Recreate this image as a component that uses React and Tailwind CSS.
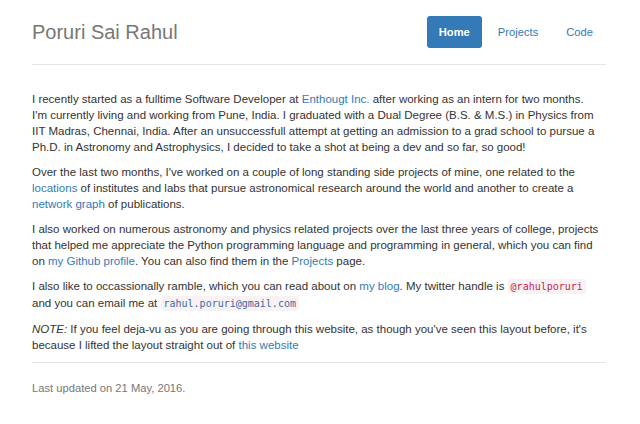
export default function App() {
  const link = 'text-[#337ab7]';
  const code =
    'font-["DejaVu_Sans_Mono",monospace] text-[10px] px-[3px] py-[2px] rounded-[3px] bg-[#f9f2f4]';

  return (
    <div className="min-h-screen bg-white font-['Liberation_Sans',Arial,sans-serif] text-[#333] text-[11.2px] leading-[16px]">
      <div className="ml-[32px] w-[574px]">
        <header className="flex items-center justify-between pt-4 pb-4 border-b border-[#e5e5e5]">
          <h3 className="text-[20px] leading-[22px] text-[#777]">Poruri Sai Rahul</h3>
          <nav className="flex gap-[4px] mr-[1px]">
            <a className="px-[12px] py-[8px] rounded-[3px] bg-[#337ab7] text-white font-bold">Home</a>
            <a className={`px-[12px] py-[8px] ${link}`}>Projects</a>
            <a className={`px-[12px] py-[8px] ${link}`}>Code</a>
          </nav>
        </header>

        <main className="pt-[26px] w-[568px] text-[11.5px]">
          <p className="mb-[9px]">
            I recently started as a fulltime Software Developer at <a className={link}>Enthougt Inc.</a> after
            working as an intern for two months. I'm currently living and working from Pune, India. I graduated
            with a Dual Degree (B.S. &amp; M.S.) in Physics from IIT Madras, Chennai, India. After an
            unsuccessfull attempt at getting an admission to a grad school to pursue a Ph.D. in Astronomy and
            Astrophysics, I decided to take a shot at being a dev and so far, so good!
          </p>
          <p className="mb-[9px]">
            Over the last two months, I've worked on a couple of long standing side projects of mine, one related
            to the <a className={link}>locations</a> of institutes and labs that pursue astronomical research
            around the world and another to create a <a className={link}>network graph</a> of publications.
          </p>
          <p className="mb-[9px]">
            I also worked on numerous astronomy and physics related projects over the last three years of college,
            projects that helped me appreciate the Python programming language and programming in general, which
            you can find on <a className={link}>my Github profile</a>. You can also find them in the{' '}
            <a className={link}>Projects</a> page.
          </p>
          <p className="mb-[9px]">
            I also like to occassionally ramble, which you can read about on <a className={link}>my blog</a>. My
            twitter handle is <code className={`${code} text-[#c7254e]`}>@rahulporuri</code> and you can email me
            at <code className={`${code} text-[#3d6aa0]`}>rahul.poruri@gmail.com</code>
          </p>
          <p className="mb-[9px]">
            <em>NOTE:</em> If you feel deja-vu as you are going through this website, as though you've seen this
            layout before, it's because I lifted the layout straight out of <a className={link}>this website</a>
          </p>
        </main>

        <footer className="border-t border-[#e5e5e5] pt-[17px] text-[#777]">
          <p>Last updated on 21 May, 2016.</p>
        </footer>
      </div>
    </div>
  );
}
